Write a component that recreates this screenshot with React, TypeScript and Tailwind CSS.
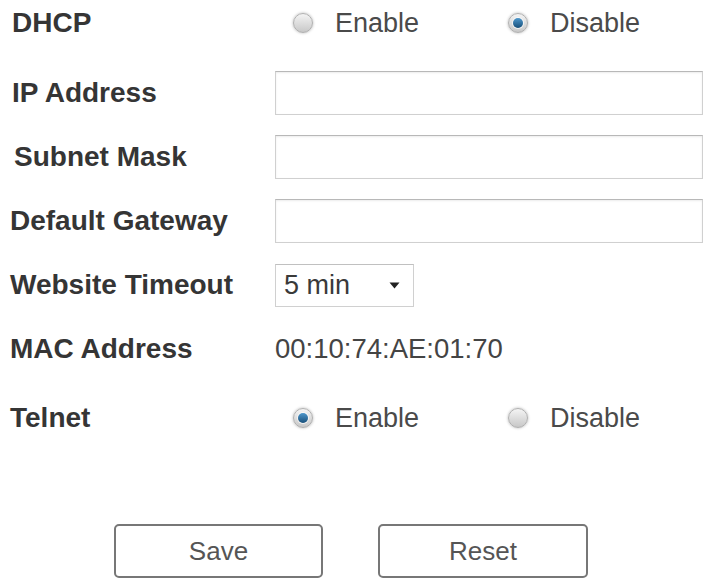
import React from "react";

function Radio({ checked }: { checked: boolean }) {
  return (
    <span className="relative inline-flex h-[20px] w-[20px] shrink-0 items-center justify-center rounded-full border border-[#b0b0b0] bg-gradient-to-b from-[#f4f4f4] to-[#c8c8c8] shadow-[0_0_3px_rgba(0,0,0,0.3)]">
      {checked && (
        <span className="h-[10px] w-[10px] rounded-full bg-gradient-to-b from-[#4f98cc] to-[#17507b] shadow-[0_0_0_1px_rgba(255,255,255,0.7)]" />
      )}
    </span>
  );
}

function RadioPair({ enabled }: { enabled: boolean }) {
  return (
    <div className="flex items-center">
      <div className="ml-[18px] flex w-[215px] items-center gap-[22px]">
        <Radio checked={enabled} />
        <span>Enable</span>
      </div>
      <div className="flex items-center gap-[22px]">
        <Radio checked={!enabled} />
        <span>Disable</span>
      </div>
    </div>
  );
}

function TextBox() {
  return (
    <div className="h-[44px] w-[428px] border border-[#d0d0d0] border-t-[#b8b8b8] bg-white shadow-[inset_0_1px_2px_rgba(0,0,0,0.08)]" />
  );
}

function Row({
  label,
  indent,
  height,
  children,
}: {
  label: string;
  indent: string;
  height: string;
  children: React.ReactNode;
}) {
  return (
    <div className={`flex items-center ${height}`}>
      <div className={`w-[275px] shrink-0 text-[28px] font-bold text-[#353535] ${indent}`}>{label}</div>
      <div className="flex items-center">{children}</div>
    </div>
  );
}

export default function App() {
  return (
    <div
      className="h-[582px] w-[706px] bg-white text-[27px] leading-none text-[#4a4a4a]"
      style={{ fontFamily: '"Liberation Sans", Arial, sans-serif' }}
    >
      <Row label="DHCP" indent="pl-[12px]" height="h-[46px]">
        <RadioPair enabled={false} />
      </Row>
      <div className="mt-[15px]">
        <Row label="IP Address" indent="pl-[12px]" height="h-[64px]">
          <TextBox />
        </Row>
        <Row label="Subnet Mask" indent="pl-[14px]" height="h-[64px]">
          <TextBox />
        </Row>
        <Row label="Default Gateway" indent="pl-[10px]" height="h-[64px]">
          <TextBox />
        </Row>
        <Row label="Website Timeout" indent="pl-[10px]" height="h-[64px]">
          <div className="flex h-[43px] w-[139px] items-center justify-between border border-[#d0d0d0] border-t-[#c0c0c0] bg-white pl-[8px] pr-[13px] text-[#3a3a3a]">
            <span>5 min</span>
            <svg width="11" height="7" viewBox="0 0 11 7">
              <path d="M0.5 0.5 L10.5 0.5 L5.5 6.5 Z" fill="#222" />
            </svg>
          </div>
        </Row>
        <Row label="MAC Address" indent="pl-[10px]" height="h-[64px]">
          <span className="text-[27.5px] text-[#444]">00:10:74:AE:01:70</span>
        </Row>
        <Row label="Telnet" indent="pl-[10px]" height="h-[74px]">
          <RadioPair enabled={true} />
        </Row>
      </div>
      <div className="mt-[69px] flex gap-[55px] pl-[114px] text-[26px]">
        <button className="h-[54px] w-[209px] rounded-[5px] border-2 border-[#777] bg-white text-[#555]">
          Save
        </button>
        <button className="h-[54px] w-[210px] rounded-[5px] border-2 border-[#777] bg-white text-[#555]">
          Reset
        </button>
      </div>
    </div>
  );
}
